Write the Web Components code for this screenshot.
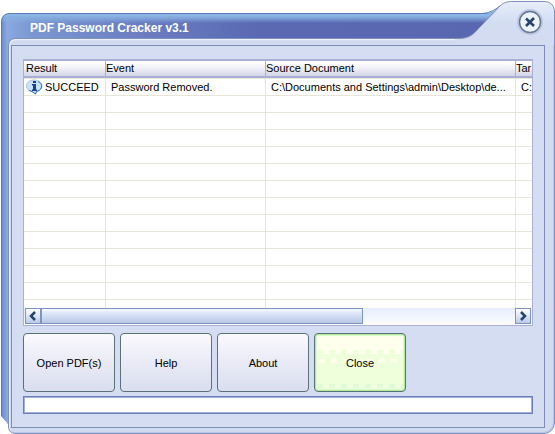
<!DOCTYPE html>
<html lang="en">
<head>
<meta charset="utf-8">
<title>PDF Password Cracker v3.1</title>
<style>
  body {
    margin: 0;
    background: #fff;
    color: #000;
    font: 11px/16px "Liberation Sans", Arial, sans-serif;
  }

  .buttons {
    display: flex;
    gap: 5px;
    margin: 7px 0 4px;
  }
</style>
</head>
<body>

<skin-window caption="PDF Password Cracker v3.1">
  <result-list></result-list>
  <div class="buttons">
    <skin-button>Open PDF(s)</skin-button>
    <skin-button>Help</skin-button>
    <skin-button>About</skin-button>
    <skin-button active>Close</skin-button>
  </div>
  <status-field label="Status"></status-field>
</skin-window>

<script>
class SkinElement extends HTMLElement {

  get html() {
    return `<slot></slot>`;
  }

  get css() {
    return ``;
  }

  constructor() {
    super();
    this.root = this.attachShadow({ mode: 'open' });
  }

  connectedCallback() {
    this.root.innerHTML = `<style>* { box-sizing: border-box; } ${this.css}</style>` + this.html;
  }
}

/**
 * The window frame: blue title bar and left edge, with the pale
 * panel and its raised tab for the close button on top.
 */
class SkinWindow extends SkinElement {

  get css() {
    return `
      :host {
        display: block;
        position: relative;
        padding: 13px 0 0 1px;
      }
      .edge {
        position: absolute;
        inset: 13px 40px 10px 1px;
        border: 1px solid #5b7bb5;
        border-radius: 8px 0 0 0;
        background:
          linear-gradient(#8cbbe8, #86aee0 3px, transparent 9px),
          linear-gradient(90deg, #6d8fd0, #8aa9de 5px, #7b97d3 30px, #6c80c3 25%, #5a69b2 50%, #5967b0);
        clip-path: polygon(0 0, 100% 0, 100% 100%, 7px 100%, 0 calc(100% - 8px));
      }
      header {
        position: relative;
        display: flex;
        align-items: center;
        height: 25px;
        padding: 4px 0 0 29px;
      }
      h1 {
        margin: 0;
        color: #fff;
        font: bold 12px/16px "Liberation Sans", Arial, sans-serif;
      }
      .panel {
        position: relative;
        margin-left: 7px;
        padding: 6px 9px 5px 2px;
        border: 1px solid #8091bb;
        border-radius: 7px 0 11px 7px;
        background: #d3dbf1;
        box-shadow: inset 1px 1px #eaf0fc, inset -1px -1px #b8c7e9;
      }
      .tab {
        position: absolute;
        top: 0;
        right: 0;
      }
      .client {
        padding: 13px 11px 13px;
        border: 1px solid #7c8db8;
        background: #d5ddf3;
      }
      button {
        position: absolute;
        top: 8px;
        right: 11px;
        width: 28px;
        height: 28px;
        padding: 0;
        border: 0;
        background: none;
      }
    `;
  }

  get html() {
    return `
      <div class="edge"></div>
      <header><h1>${this.getAttribute('caption')}</h1></header>
      <div class="panel"><div class="client"><slot></slot></div></div>
      <svg class="tab" width="100" height="45" viewBox="0 0 100 45" aria-hidden="true">
        <defs>
          <linearGradient id="tab" x2="0" y2="1">
            <stop offset="0" stop-color="#e6eefa"/>
            <stop offset=".5" stop-color="#d3ddf2"/>
            <stop offset="1" stop-color="#d3dbf1"/>
          </linearGradient>
        </defs>
        <path d="M28 14Q39 13 47 5L38 15Z" fill="#86b4e3"/>
        <path d="M28 13.500Q38 12.500 46 5" fill="none" stroke="#5b7bb5"/>
        <path d="M0 38.500H5C14 38 18 35 24 28L45 6C49 2 53 1.500 58 1.500H90Q98 2 99.500 10V45H0Z" fill="url(#tab)"/>
        <path d="M0 38.500H5C14 38 18 35 24 28L45 6C49 2 53 1.500 58 1.500H90Q98 2 99.500 10V45" fill="none" stroke="#8091bb"/>
      </svg>
      <button aria-label="Close window">
        <svg width="28" height="28" viewBox="0 0 28 28">
          <circle cx="14" cy="14" r="13" fill="#bcc8e2"/>
          <circle cx="14" cy="14" r="10.500" fill="#edf2fa" stroke="#66778f" stroke-width="1.500"/>
          <path d="M10 10.500L18 18M18 10L10 18" stroke="#24456b" stroke-width="2.600"/>
        </svg>
      </button>
    `;
  }
}

class ResultList extends SkinElement {

  get columns() {
    return ['Result', 'Event', 'Source Document', 'Tar'];
  }

  get items() {
    return [
      ['SUCCEED', 'Password Removed.', 'C:\\Documents and Settings\\admin\\Desktop\\de...', 'C:']
    ];
  }

  get rowCount() {
    return 14;
  }

  get css() {
    return `
      :host {
        display: block;
        border: 1px solid #a9afd5;
        background: #fff;
      }
      .view {
        height: 248px;
        overflow: hidden;
      }
      table {
        width: 100%;
        border-collapse: separate;
        border-spacing: 0;
        table-layout: fixed;
      }
      col:nth-child(1) { width: 82px; }
      col:nth-child(2) { width: 160px; }
      col:nth-child(3) { width: 250px; }
      th, td {
        padding: 0;
        overflow: hidden;
        text-align: left;
        white-space: nowrap;
        font-weight: normal;
      }
      th {
        height: 18px;
        border: solid #a9afd5;
        border-width: 1px 1px 2px 0;
        background: linear-gradient(#fff, #f4f4fa 40%, #d3d5e8);
        line-height: 15px;
      }
      th:first-child { padding-left: 2px; }
      th:last-child, td:last-child { border-right: 0; }
      td {
        height: 17px;
        padding-left: 5px;
        border: solid #e6e5d8;
        border-width: 0 1px 1px 0;
      }
      tr:first-child td {
        height: 18px;
        border-top-width: 1px;
      }
      td:first-child { padding-left: 2px; }
      .state {
        display: flex;
        align-items: center;
        gap: 2px;
      }
      .state svg { flex: none; }
    `;
  }

  get icon() {
    return `
      <svg width="17" height="16" viewBox="0 0 17 16" aria-hidden="true">
        <path d="M8 1C12.500 1 16 3.500 16 7C16 10 13.500 12 10.500 12.500L9.500 15L6 12.500C3 12 .5 10 .5 7C.5 3.500 3.500 1 8 1Z" fill="#c9e0f7" stroke="#a9c3e2"/>
        <path d="M12 2.500C15 4 16 5.500 15.500 8C15 11 12 12 10.500 12.500L9.500 15L6 12.500L3 11.500" fill="none" stroke="#2f73b7"/>
        <path d="M7 2H10V4H7ZM6 5H10V10.500H11V12H6V10.500H7V6.500H6Z" fill="#153f91"/>
      </svg>`;
  }

  renderRow(item) {
    const cells = this.columns.map((name, i) => {
      const text = item ? item[i] : '';
      return i == 0 && item ?
        `<td><div class="state">${this.icon}<span>${text}</span></div></td>` :
        `<td>${text}</td>`;
    });
    return `<tr>${cells.join('')}</tr>`;
  }

  get html() {
    const rows = [];
    for (let i = 0; i < this.rowCount; i++) {
      rows.push(this.renderRow(this.items[i]));
    }
    return `
      <div class="view">
        <table>
          <colgroup><col><col><col><col></colgroup>
          <thead><tr>${this.columns.map(name => `<th>${name}</th>`).join('')}</tr></thead>
          <tbody>${rows.join('')}</tbody>
        </table>
      </div>
      <scroll-strip></scroll-strip>
    `;
  }
}

class ScrollStrip extends SkinElement {

  get css() {
    return `
      :host {
        display: flex;
        height: 17px;
        padding: 0 1px 1px;
        background: linear-gradient(#e7edfc, #fbfcff);
      }
      button {
        width: 16px;
        padding: 0;
        border: 1px solid #7e94bf;
        background: linear-gradient(#fff, #e4ebf9 40%, #b9c9e8);
        line-height: 0;
      }
      .track { flex: 1; }
      .thumb {
        width: 68%;
        height: 16px;
        border: 1px solid #7e94bf;
        background: linear-gradient(#f4f8ff, #d8e2f5 40%, #b6c7e6);
      }
    `;
  }

  get html() {
    return `
      <button aria-label="Scroll left">
        <svg width="14" height="14"><path d="M9 3L5 7L9 11" fill="none" stroke="#24456b" stroke-width="2.500"/></svg>
      </button>
      <div class="track"><div class="thumb"></div></div>
      <button aria-label="Scroll right">
        <svg width="14" height="14"><path d="M5 3L9 7L5 11" fill="none" stroke="#24456b" stroke-width="2.500"/></svg>
      </button>
    `;
  }
}

class SkinButton extends SkinElement {

  get css() {
    return `
      :host { display: block; }
      button {
        width: 92px;
        height: 59px;
        padding: 0;
        border: 1px solid #5c7078;
        border-radius: 4px;
        background: linear-gradient(#fafafd, #e9eaf5 50%, #dadeef);
        color: inherit;
        font: inherit;
      }
      :host([active]) button {
        background:
          linear-gradient(90deg, #efffda 50%, transparent 50%) 2px 16px / 12px 4px repeat-x,
          linear-gradient(90deg, #fcffea 50%, transparent 50%) 4px 25px / 12px 4px repeat-x,
          linear-gradient(90deg, #e0fad8 50%, transparent 50%) 2px 50px / 12px 4px repeat-x,
          linear-gradient(#ffffee 20px, #efffdc 20px);
        box-shadow: inset 0 0 0 1px #aeeb9c, inset 0 0 1px 2px #d8fbc8;
      }
    `;
  }

  get html() {
    return `<button><slot></slot></button>`;
  }
}

class StatusField extends SkinElement {

  get css() {
    return `
      :host { display: block; }
      input {
        display: block;
        width: 100%;
        height: 18px;
        padding: 0 2px;
        border: 1px solid #6c7eb5;
        background: #fff;
        box-shadow: inset 0 0 0 1px #a3b0d8;
        font: inherit;
      }
    `;
  }

  get html() {
    return `<input type="text" readonly aria-label="${this.getAttribute('label')}">`;
  }
}

customElements.define('scroll-strip', ScrollStrip);
customElements.define('result-list', ResultList);
customElements.define('skin-button', SkinButton);
customElements.define('status-field', StatusField);
customElements.define('skin-window', SkinWindow);
</script>
</body>
</html>
